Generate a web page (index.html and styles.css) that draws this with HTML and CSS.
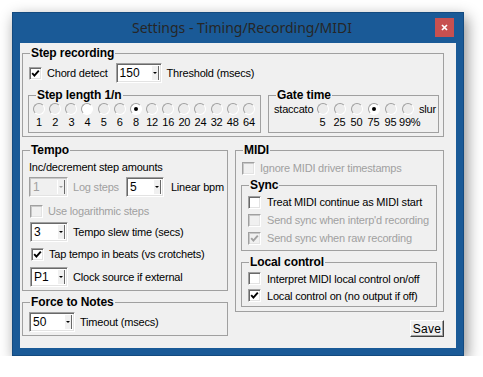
FILE: index.html
```html
<!DOCTYPE html>
<html lang="en">
<head>
    <meta charset="UTF-8">
    <meta name="viewport" content="width=device-width, initial-scale=1.0">
    <title>Settings - Timing/Recording/MIDI</title>
    <link rel="stylesheet" href="styles.css">
</head>
<body>

    <div class="window">
        <div class="titlebar">
            <span class="title">Settings - Timing/Recording/MIDI</span>
            <span class="close">
                <svg width="7" height="7" viewBox="0 0 7 7"><path d="M1 1L6 6M6 1L1 6" stroke="#fff" stroke-width="1.7"/></svg>
            </span>
        </div>

        <div class="client">
            <fieldset class="group step-rec">
                <legend>Step recording</legend>
                <div class="row chord-row">
                    <span class="check"><svg width="9" height="9" viewBox="0 0 9 9"><path d="M1.2 4.2L3.4 6.6L7.8 1.6" fill="none" stroke="#000" stroke-width="1.9"/></svg></span>
                    <span class="text">Chord detect</span>
                    <span class="spin w46"><span class="val">150</span><span class="btn"><i></i></span></span>
                    <span class="text">Threshold (msecs)</span>
                </div>

                <div class="subgroups">
                    <fieldset class="group lengths">
                        <legend>Step length 1/n</legend>
                        <div class="radio-grid">
                            <span class="radio"></span><span class="radio"></span><span class="radio"></span><span class="radio hot"></span>
                            <span class="radio"></span><span class="radio"></span><span class="radio on"></span><span class="radio"></span>
                            <span class="radio"></span><span class="radio"></span><span class="radio"></span><span class="radio"></span>
                            <span class="radio"></span><span class="radio"></span>
                            <span>1</span><span>2</span><span>3</span><span>4</span><span>5</span><span>6</span><span>8</span>
                            <span>12</span><span>16</span><span>20</span><span>24</span><span>32</span><span>48</span><span>64</span>
                        </div>
                    </fieldset>

                    <fieldset class="group gate">
                        <legend>Gate time</legend>
                        <div class="gate-grid">
                            <span class="end">staccato</span>
                            <span class="radio"></span><span class="radio"></span><span class="radio"></span>
                            <span class="radio on"></span><span class="radio"></span><span class="radio"></span>
                            <span class="end slur">slur</span>
                            <span></span>
                            <span>5</span><span>25</span><span>50</span><span>75</span><span>95</span><span>99%</span>
                            <span></span>
                        </div>
                    </fieldset>
                </div>
            </fieldset>

            <div class="columns">
                <div class="col-left">
                    <fieldset class="group tempo">
                        <legend>Tempo</legend>
                        <div class="row line">Inc/decrement step amounts</div>
                        <div class="row r-steps">
                            <span class="spin w39 disabled"><span class="val">1</span><span class="btn"><i></i></span></span>
                            <span class="text dim">Log steps</span>
                            <span class="spin w38 lin"><span class="val">5</span><span class="btn"><i></i></span></span>
                            <span class="text">Linear bpm</span>
                        </div>
                        <div class="row r-log">
                            <span class="check disabled"></span>
                            <span class="text dim">Use logarithmic steps</span>
                        </div>
                        <div class="row r-slew">
                            <span class="spin w38"><span class="val">3</span><span class="btn"><i></i></span></span>
                            <span class="text">Tempo slew time (secs)</span>
                        </div>
                        <div class="row r-tap">
                            <span class="check"><svg width="9" height="9" viewBox="0 0 9 9"><path d="M1.2 4.2L3.4 6.6L7.8 1.6" fill="none" stroke="#000" stroke-width="1.9"/></svg></span>
                            <span class="text">Tap tempo in beats (vs crotchets)</span>
                        </div>
                        <div class="row r-clock">
                            <span class="spin w38"><span class="val">P1</span><span class="btn"><i></i></span></span>
                            <span class="text">Clock source if external</span>
                        </div>
                    </fieldset>

                    <fieldset class="group force">
                        <legend>Force to Notes</legend>
                        <div class="row">
                            <span class="spin w46"><span class="val">50</span><span class="btn"><i></i></span></span>
                            <span class="text">Timeout (msecs)</span>
                        </div>
                    </fieldset>
                </div>

                <div class="col-right">
                    <fieldset class="group midi">
                        <legend>MIDI</legend>
                        <div class="row r-ignore">
                            <span class="check disabled"></span>
                            <span class="text dim">Ignore MIDI driver timestamps</span>
                        </div>

                        <fieldset class="group sub sync">
                            <legend>Sync</legend>
                            <div class="row opt">
                                <span class="check"></span>
                                <span class="text">Treat MIDI continue as MIDI start</span>
                            </div>
                            <div class="row opt">
                                <span class="check disabled"></span>
                                <span class="text dim">Send sync when interp'd recording</span>
                            </div>
                            <div class="row opt">
                                <span class="check disabled"><svg width="9" height="9" viewBox="0 0 9 9"><path d="M1.2 4.2L3.4 6.6L7.8 1.6" fill="none" stroke="#a0a0a0" stroke-width="1.9"/></svg></span>
                                <span class="text dim">Send sync when raw recording</span>
                            </div>
                        </fieldset>

                        <fieldset class="group sub local">
                            <legend>Local control</legend>
                            <div class="row opt">
                                <span class="check"></span>
                                <span class="text">Interpret MIDI local control on/off</span>
                            </div>
                            <div class="row opt">
                                <span class="check"><svg width="9" height="9" viewBox="0 0 9 9"><path d="M1.2 4.2L3.4 6.6L7.8 1.6" fill="none" stroke="#000" stroke-width="1.9"/></svg></span>
                                <span class="text">Local control on (no output if off)</span>
                            </div>
                        </fieldset>
                    </fieldset>

                    <div class="actions">
                        <button class="save">Save</button>
                    </div>
                </div>
            </div>
        </div>
    </div>

</body>
</html>
```

FILE: styles.css
```css
body {
    margin: 0;
    padding: 12px 0 0 12px;
    background-color: #fff;
    font-family: "Liberation Sans", Arial, sans-serif;
    font-size: 11px;
    letter-spacing: -0.2px;
    color: #000;
}

.window {
    width: 452px;
    height: 344px;
    box-sizing: border-box;
    border: 1px solid #134a7f;
    background-color: #1a5a97;
    padding: 0 7px 7px;
    display: flex;
    flex-direction: column;
    box-shadow: 3px 5px 14px rgba(0, 0, 0, 0.45);
}

.titlebar {
    height: 30px;
    display: grid;
    grid-template-columns: 21px 1fr 21px;
    align-items: start;
}

.title {
    grid-column: 2;
    text-align: center;
    font-family: "Noto Sans", sans-serif;
    font-size: 14px;
    letter-spacing: 0;
    line-height: 30px;
    color: #262626;
    padding-left: 8px;
}

.close {
    grid-column: 3;
    width: 19px;
    height: 19px;
    margin-top: 5px;
    background-color: #c75050;
    display: flex;
    align-items: center;
    justify-content: center;
}

.client {
    flex: 1;
    background-color: #f0f0f0;
    padding: 3px 12px 0 2px;
}

/* group boxes */
.group {
    margin: 0;
    border: 1px solid #a0a0a0;
    min-width: 0;
}

.group legend {
    font-size: 12px;
    font-weight: bold;
    letter-spacing: -0.1px;
    line-height: 14px;
    padding: 0 1px;
}

.row {
    display: flex;
    align-items: center;
}

.text {
    white-space: nowrap;
}

.dim {
    color: #a0a0a0;
}

/* controls */
.check {
    width: 13px;
    height: 13px;
    box-sizing: border-box;
    flex: none;
    border: 1px solid;
    border-color: #a0a0a0 #fff #fff #a0a0a0;
    box-shadow: inset 1px 1px #696969, inset -1px -1px #e3e3e3;
    background-color: #fff;
    display: flex;
    align-items: center;
    justify-content: center;
    margin-right: 5px;
}

.check.disabled {
    background-color: #f0f0f0;
    box-shadow: inset 1px 1px #c8c8c8, inset -1px -1px #e3e3e3;
}

.spin {
    height: 20px;
    box-sizing: border-box;
    flex: none;
    border: 1px solid;
    border-color: #a0a0a0 #fff #fff #a0a0a0;
    box-shadow: inset 1px 1px #696969, inset -1px -1px #e3e3e3;
    background-color: #fff;
    display: flex;
    font-size: 12px;
    letter-spacing: 0;
}

.spin .val {
    flex: 1;
    padding-left: 3px;
    line-height: 18px;
}

.spin .btn {
    width: 6px;
    margin: 2px 2px 2px 0;
    background-color: #f0f0f0;
    border-left: 1px solid #fff;
    border-right: 1px solid #696969;
    display: flex;
    align-items: center;
    justify-content: center;
}

.spin .btn i {
    width: 0;
    height: 0;
    border-left: 2px solid transparent;
    border-right: 2px solid transparent;
    border-top: 2px solid #000;
}

.spin.disabled {
    background-color: #f0f0f0;
    color: #a0a0a0;
    box-shadow: inset 1px 1px #c8c8c8, inset -1px -1px #e3e3e3;
}

.spin.disabled .btn i {
    border-top-color: #a0a0a0;
}

.w46 { width: 46px; }
.w39 { width: 39px; }
.w38 { width: 38px; }

.radio {
    width: 12px;
    height: 12px;
    box-sizing: border-box;
    border-radius: 50%;
    border: 1px solid;
    border-color: #a0a0a0 #fff #fff #a0a0a0;
    background-color: #ececec;
    justify-self: center;
    position: relative;
}

.radio.hot {
    background-color: #fff;
}

.radio.on {
    background-color: #fff;
}

.radio.on::after {
    content: "";
    position: absolute;
    left: 3px;
    top: 3px;
    width: 4px;
    height: 4px;
    border-radius: 50%;
    background-color: #000;
}

/* step recording */
.step-rec {
    padding: 3px 4px 3px 5px;
}

.step-rec > legend {
    margin-left: 2px;
}

.chord-row {
    margin-left: 1px;
}

.chord-row .spin {
    margin: 0 5px 0 8px;
}

.subgroups {
    display: flex;
    gap: 7px;
    margin-top: 5px;
}

.lengths {
    width: 233px;
    box-sizing: border-box;
    padding: 1px 2px 4px 2px;
}

.lengths legend {
    margin-left: 5px;
}

.radio-grid {
    display: grid;
    grid-template-columns: repeat(14, 16.15px);
    grid-template-rows: 12px 12px;
    row-gap: 1px;
    text-align: center;
    line-height: 12px;
}

.gate {
    flex: 1;
    padding: 1px 2px 4px 5px;
}

.gate legend {
    margin-left: 2px;
}

.gate-grid {
    display: grid;
    grid-template-columns: 40px repeat(6, 17px) auto;
    grid-template-rows: 12px 12px;
    row-gap: 1px;
    text-align: center;
    line-height: 12px;
}

.gate-grid .end {
    text-align: left;
}

.gate-grid .slur {
    padding-left: 3px;
}

/* lower columns */
.columns {
    display: flex;
    gap: 7px;
    margin-top: 6px;
}

.col-left {
    width: 206px;
    display: flex;
    flex-direction: column;
    gap: 4px;
}

.col-right {
    width: 209px;
}

.tempo {
    padding: 3px 4px 3px 6px;
}

.tempo legend,
.force legend {
    margin-left: 1px;
}

.tempo .line {
    height: 14px;
}

.r-steps {
    margin-top: 3px;
}

.r-steps .text {
    margin-left: 5px;
}

.r-steps .lin {
    margin-left: 7px;
    margin-right: 2px;
}

.r-log {
    margin-top: 7px;
    margin-left: 1px;
    height: 14px;
}

.r-slew {
    margin-top: 4px;
    margin-left: 1px;
}

.r-slew .text,
.r-clock .text,
.force .text {
    margin-left: 5px;
}

.r-tap {
    margin-top: 5px;
    margin-left: 2px;
    height: 14px;
}

.r-clock {
    margin-top: 6px;
    margin-left: 1px;
}

.force {
    padding: 3px 4px 3px 6px;
}

.midi {
    padding: 4px 6px 4px 5px;
}

.midi > legend {
    margin-left: 2px;
}

.r-ignore {
    height: 14px;
    margin-left: 1px;
}

.sub {
    padding: 1px 4px 3px 6px;
    margin-top: 3px;
}

.sub legend {
    margin-left: 1px;
}

.sub .opt {
    height: 18px;
}

.sub .check {
    margin-right: 6px;
}

.local {
    margin-top: 4px;
    padding-bottom: 2px;
}

.local .opt {
    height: 17px;
}

.actions {
    display: flex;
    justify-content: flex-end;
    margin-top: 8px;
}

.save {
    width: 34px;
    height: 17px;
    padding: 0;
    font-family: "Liberation Sans", Arial, sans-serif;
    font-size: 12px;
    letter-spacing: 0.3px;
    background-color: #f0f0f0;
    border: 1px solid;
    border-color: #fff #404040 #404040 #fff;
    box-shadow: inset -1px -1px #a0a0a0;
    color: #000;
}
```
